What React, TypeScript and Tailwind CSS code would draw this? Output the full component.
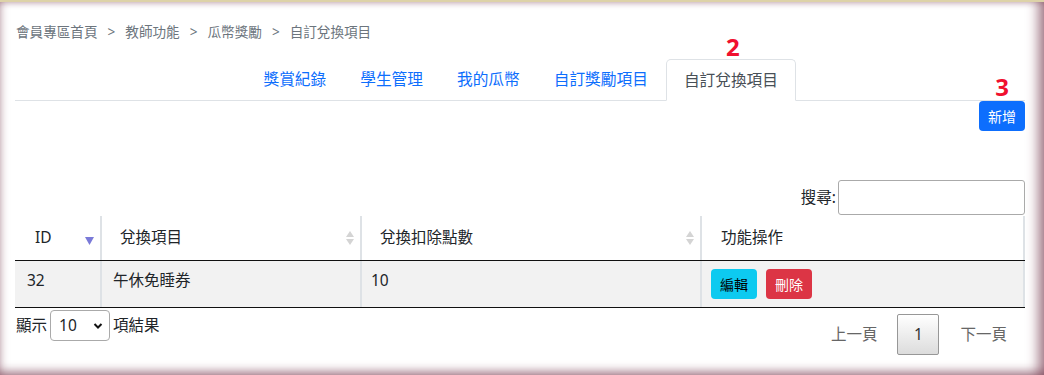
import React from 'react';

const FONT = { fontFamily: '"Noto Sans", "Noto Sans CJK TC", sans-serif' };

const tabs = ['獎賞紀錄', '學生管理', '我的瓜幣', '自訂獎勵項目'];

function SortBoth() {
  return (
    <svg width="8" height="14" viewBox="0 0 8 14" className="shrink-0">
      <path d="M4 0 L8 6 H0 Z" fill="#d4d4d4" />
      <path d="M4 14 L8 8 H0 Z" fill="#d4d4d4" />
    </svg>
  );
}

function SortDesc() {
  return (
    <svg width="9" height="8" viewBox="0 0 9 8" className="shrink-0">
      <path d="M0 0 H9 L4.5 8 Z" fill="#7a7ad8" />
    </svg>
  );
}

export default function App() {
  return (
    <div
      className="relative w-[1044px] h-[375px] overflow-hidden bg-white border-t-[2px] border-[#ddd2a8] shadow-[inset_-14px_0_12px_-8px_rgba(120,60,80,0.65),inset_0_-10px_10px_-6px_rgba(120,60,80,0.6),inset_6px_0_8px_-5px_rgba(120,60,80,0.4),inset_0_6px_6px_-5px_rgba(120,60,80,0.35)]"
      style={FONT}
    >
      <div className="ml-[15px] mr-[19px]">
        {/* breadcrumb */}
        <div className="pt-[21px] h-[39px] leading-[18px] text-[13.6px] text-[#6c757d] flex gap-[10px] pl-px">
          <span>會員專區首頁</span>
          <span>&gt;</span>
          <span>教師功能</span>
          <span>&gt;</span>
          <span>瓜幣獎勵</span>
          <span>&gt;</span>
          <span>自訂兌換項目</span>
        </div>

        {/* tabs */}
        <div className="mt-[18px] flex justify-end pr-[229px] border-b border-[#dee2e6]">
          {tabs.map((t) => (
            <a key={t} className="h-[41px] leading-[41px] px-[17px] text-[15.7px] text-[#0d6efd]">
              {t}
            </a>
          ))}
          <a className="relative h-[42px] -mb-px leading-[40px] px-[17px] ml-px text-[15.7px] text-[#495057] bg-white border border-b-white border-[#dee2e6] rounded-t-[5px]">
            自訂兌換項目
            <span className="absolute left-[59px] top-[-25px] text-[24px] leading-none font-bold text-[#f0102f]">2</span>
          </a>
        </div>

        {/* add button */}
        <div className="relative flex justify-end">
          <span className="absolute right-[16px] top-[-26px] text-[24px] leading-none font-bold text-[#f0102f]">3</span>
          <button className="w-[46px] h-[30px] rounded-[4px] bg-[#0d6efd] text-white text-[14px]">新增</button>
        </div>

        {/* search */}
        <div className="mt-[49px] flex justify-end items-center gap-[2px]">
          <label className="text-[15.5px] text-[#212529]">搜尋:</label>
          <input className="w-[187px] h-[35px] border border-[#aaa] rounded-[3px] bg-white" />
        </div>

        {/* table */}
        <div className="mt-px text-[15.5px] text-[#212529]">
          <div className="flex h-[45px] border-b border-[#111]">
            <div className="w-[87px] flex items-center justify-between pl-[20px] pr-[6px] border-r-2 border-[#dee2e6]">
              <span>ID</span>
              <span className="mt-[6px]"><SortDesc /></span>
            </div>
            <div className="w-[260px] flex items-center justify-between pl-[18px] pr-[6px] border-r-2 border-[#dee2e6]">
              <span>兌換項目</span>
              <SortBoth />
            </div>
            <div className="w-[340px] flex items-center justify-between pl-[18px] pr-[6px] border-r-2 border-[#dee2e6]">
              <span>兌換扣除點數</span>
              <SortBoth />
            </div>
            <div className="flex-1 flex items-center pl-[19px] border-r-2 border-[#dee2e6]">
              <span>功能操作</span>
            </div>
          </div>
          <div className="flex h-[47px] bg-[#f2f2f2] border-b border-[#111]">
            <div className="w-[87px] pl-[12px] pt-[8px] border-r-2 border-[#dee2e6]">32</div>
            <div className="w-[260px] pl-[11px] pt-[8px] border-r-2 border-[#dee2e6]">午休免睡券</div>
            <div className="w-[340px] pl-[9px] pt-[8px] border-r-2 border-[#dee2e6]">10</div>
            <div className="flex-1 flex items-center gap-[9px] pl-[9px] border-r-2 border-[#dee2e6]">
              <button className="w-[46px] h-[30px] rounded-[4px] bg-[#0dcaf0] text-black text-[14px]">編輯</button>
              <button className="w-[46px] h-[30px] rounded-[4px] bg-[#dc3545] text-white text-[14px]">刪除</button>
            </div>
          </div>
        </div>

        {/* footer */}
        <div className="flex justify-between items-start">
          <div className="mt-[2px] flex items-center gap-[3px] text-[15.5px] text-[#212529] pl-px">
            <span>顯示</span>
            <div className="relative w-[60px] h-[31px] border border-[#aaa] rounded-[4px] bg-white flex items-center pl-[8px] pr-[6px] justify-between">
              <span>10</span>
              <svg width="10" height="8" viewBox="0 0 10 8">
                <path d="M1.5 2 L5 5.5 L8.5 2" stroke="#111" strokeWidth="2" fill="none" />
              </svg>
            </div>
            <span>項結果</span>
          </div>
          <div className="mt-[6px] flex items-center text-[15.5px] text-[#666] mr-[18px]">
            <span>上一頁</span>
            <span className="ml-[20px] w-[42px] h-[41px] flex items-center justify-center border border-[#979797] rounded-[2px] bg-gradient-to-b from-white to-[#dcdcdc] text-[#333]">1</span>
            <span className="ml-[21px]">下一頁</span>
          </div>
        </div>
      </div>
    </div>
  );
}
